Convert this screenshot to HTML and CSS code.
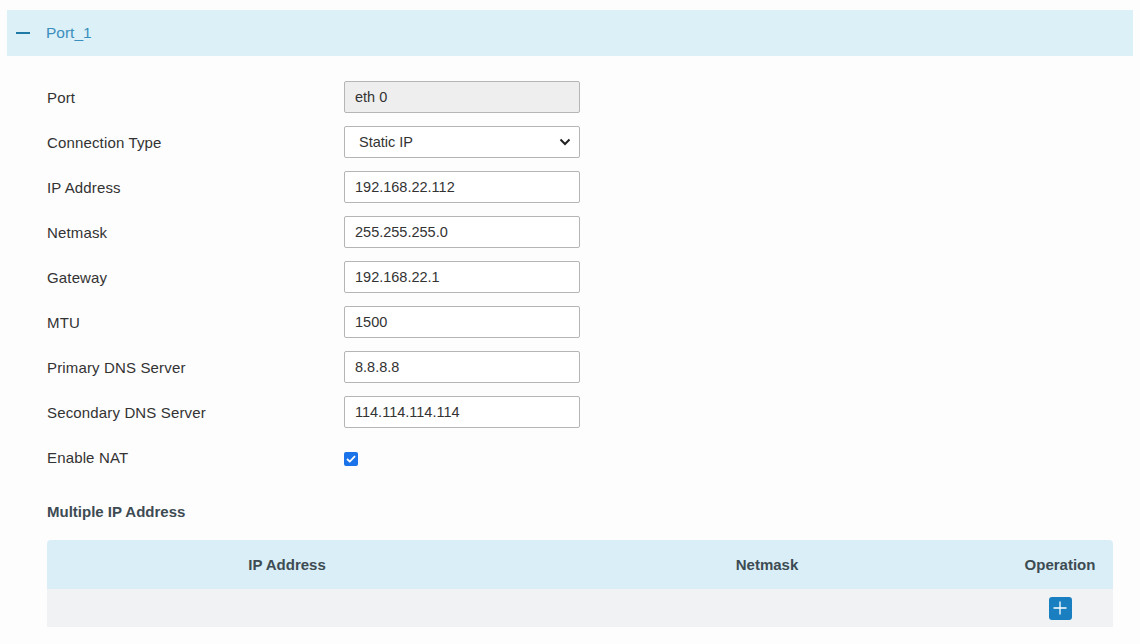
FILE: index.html
```html
<!DOCTYPE html>
<html>
<head>
<meta charset="utf-8">
<link rel="stylesheet" href="styles.css">
</head>
<body>
<div class="panel">
  <div class="panel-header">
    <span class="minus"></span>
    <span class="panel-title">Port_1</span>
  </div>
  <div class="panel-body">
    <div class="form">
      <div class="row"><label class="lbl">Port</label><input class="field readonly" type="text" value="eth 0" readonly></div>
      <div class="row"><label class="lbl">Connection Type</label>
        <div class="select">
          <span>Static IP</span>
          <svg class="chev" width="12" height="8" viewBox="0 0 12 8"><path d="M1.5 1.5 L6 6 L10.5 1.5" fill="none" stroke="#222" stroke-width="2"/></svg>
        </div>
      </div>
      <div class="row"><label class="lbl">IP Address</label><input class="field" type="text" value="192.168.22.112"></div>
      <div class="row"><label class="lbl">Netmask</label><input class="field" type="text" value="255.255.255.0"></div>
      <div class="row"><label class="lbl">Gateway</label><input class="field" type="text" value="192.168.22.1"></div>
      <div class="row"><label class="lbl">MTU</label><input class="field" type="text" value="1500"></div>
      <div class="row"><label class="lbl">Primary DNS Server</label><input class="field" type="text" value="8.8.8.8"></div>
      <div class="row"><label class="lbl">Secondary DNS Server</label><input class="field" type="text" value="114.114.114.114"></div>
      <div class="row"><label class="lbl">Enable NAT</label>
        <span class="check"><svg width="10" height="8" viewBox="0 0 10 8"><path d="M1 4 L3.8 6.6 L9 1.2" fill="none" stroke="#fff" stroke-width="1.8"/></svg></span>
      </div>
    </div>
    <div class="subtitle">Multiple IP Address</div>
    <div class="table">
      <div class="thead">
        <div class="c1">IP Address</div>
        <div class="c2">Netmask</div>
        <div class="c3">Operation</div>
      </div>
      <div class="trow">
        <div class="c1"></div>
        <div class="c2"></div>
        <div class="c3"><span class="add"><svg width="14" height="14" viewBox="0 0 14 14"><path d="M7 0.5 V13.5 M0.5 7 H13.5" stroke="#fff" stroke-width="1.3"/></svg></span></div>
      </div>
    </div>
  </div>
</div>
</body>
</html>
```

FILE: styles.css
```css
html, body {
  margin: 0;
  background: #fdfdfd;
}
body {
  padding: 10px 7px 0 7px;
  font-family: "Liberation Sans", Arial, sans-serif;
  font-size: 15px;
  color: #333;
}
.panel-header {
  height: 46px;
  background: #dcf0f7;
  display: flex;
  align-items: center;
  padding-left: 9px;
}
.minus {
  display: inline-block;
  width: 14px;
  height: 2px;
  background: #1f7ba6;
  margin-right: 16px;
}
.panel-title {
  color: #3b8fbd;
  font-size: 15.5px;
}
.panel-body {
  padding: 25px 20px 0 40px;
}
.form {
  display: flex;
  flex-direction: column;
  gap: 13px;
}
.row {
  display: flex;
  align-items: center;
  height: 32px;
}
.lbl {
  width: 297px;
  color: #333;
  font-size: 15px;
  letter-spacing: 0.15px;
}
.field {
  box-sizing: border-box;
  width: 236px;
  height: 32px;
  border: 1px solid #b5b5b5;
  border-radius: 2px;
  padding: 0 10px;
  font-family: "Liberation Sans", Arial, sans-serif;
  font-size: 14.5px;
  color: #333;
  background: #fff;
  outline: none;
}
.field.readonly {
  background: #eeeeee;
}
.select {
  box-sizing: border-box;
  width: 236px;
  height: 32px;
  border: 1px solid #b5b5b5;
  border-radius: 2px;
  padding: 0 8px 0 14px;
  display: flex;
  align-items: center;
  justify-content: space-between;
  background: #fff;
  color: #333;
  font-size: 14.5px;
}
.check {
  width: 14px;
  height: 14px;
  border-radius: 2px;
  background: #1a73e8;
  display: flex;
  align-items: center;
  justify-content: center;
  margin-top: 4px;
}
.subtitle {
  font-weight: bold;
  color: #3d4b53;
  margin-top: 31px;
  height: 16px;
  line-height: 16px;
}
.table {
  margin-top: 20px;
  width: 1066px;
  border-radius: 4px 4px 0 0;
  overflow: hidden;
}
.thead, .trow {
  display: grid;
  grid-template-columns: 480px 480px 106px;
  align-items: center;
}
.thead {
  height: 49px;
  background: #d9eef6;
  font-weight: bold;
  color: #3d4b53;
}
.trow {
  height: 38px;
  background: #f0f2f4;
}
.c1, .c2, .c3 {
  text-align: center;
}
.add {
  display: inline-flex;
  width: 23px;
  height: 23px;
  border-radius: 3px;
  background: #1a7fc0;
  align-items: center;
  justify-content: center;
  vertical-align: middle;
}
```
